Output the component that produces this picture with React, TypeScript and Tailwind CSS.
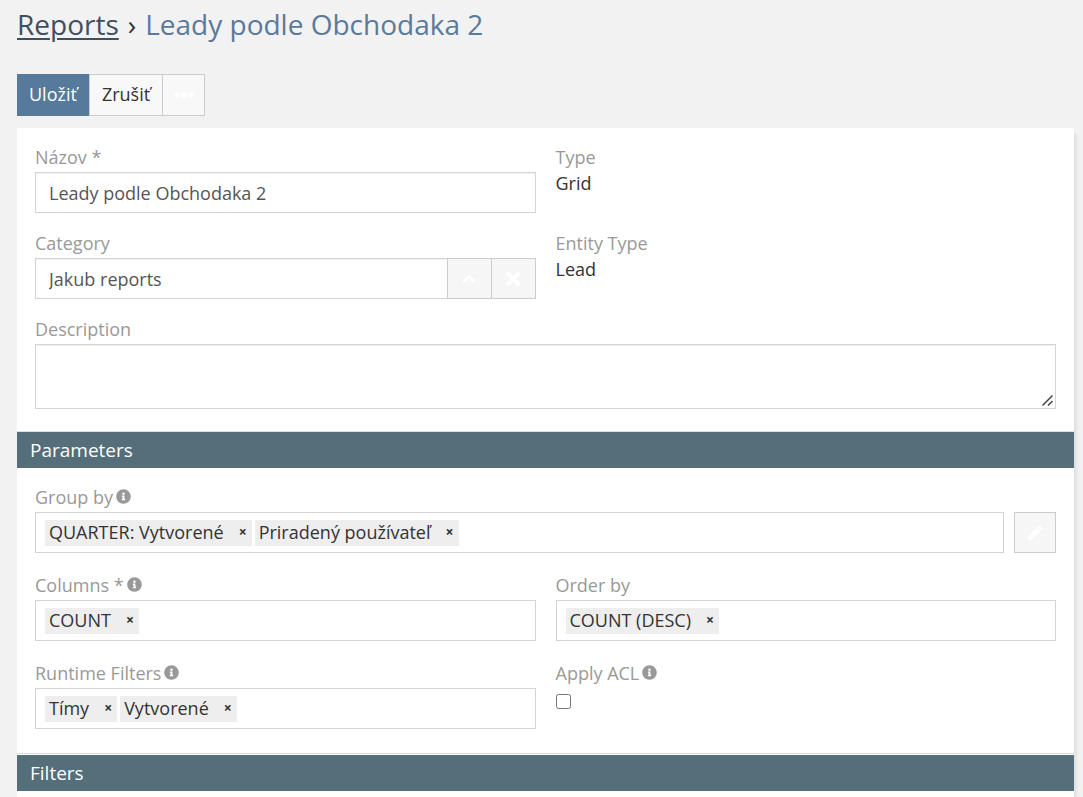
import { useState, type ReactNode } from "react";
import { FaEllipsisH, FaInfoCircle } from "react-icons/fa";

interface FieldProps {
  label: string;
  htmlFor?: string;
  info?: boolean;
  children: ReactNode;
}

function Field({ label, htmlFor, info, children }: FieldProps) {
  return (
    <div className="min-w-0">
      <label htmlFor={htmlFor} className="flex items-center gap-[3px] leading-[26px] text-[#999999]">
        {label}
        {info ? <FaInfoCircle size={15} className="mb-0.5" /> : null}
      </label>
      {children}
    </div>
  );
}

interface TagBoxProps {
  id: string;
  initial: string[];
}

function TagBox({ id, initial }: TagBoxProps) {
  const [items, setItems] = useState(initial);

  return (
    <div className="mt-0.5 flex h-[41px] min-w-0 flex-1 items-center gap-[3px] border border-[#d1d5d6] bg-white px-[9px]">
      {items.map((item) => (
        <span key={item} className="flex h-[26px] shrink-0 items-start bg-[#eeeeee] pl-1 leading-6 text-[#333333]">
          {item}
          <button
            type="button"
            aria-label={`Odstrániť ${item}`}
            className="ml-2.5 w-[18px] text-center text-sm font-bold leading-6"
            onClick={() => setItems(items.filter((other) => other !== item))}
          >
            ×
          </button>
        </span>
      ))}
      <input id={id} type="text" className="h-[26px] w-0 min-w-0 flex-1 bg-transparent outline-none" />
    </div>
  );
}

function PanelHeading({ children }: { children: ReactNode }) {
  return (
    <h2 className="h-9 bg-[#546e7a] px-[13px] text-[19px] font-medium leading-9 text-white">{children}</h2>
  );
}

function ChevronUpIcon() {
  return (
    <svg width="14" height="14" viewBox="0 0 14 14" fill="none" stroke="currentColor" strokeWidth="3">
      <path d="M1.5 10 7 4.5 12.5 10" />
    </svg>
  );
}

function RemoveIcon() {
  return (
    <svg width="16" height="16" viewBox="0 0 16 16" fill="none" stroke="currentColor" strokeWidth="4">
      <path d="M2 2 14 14M14 2 2 14" />
    </svg>
  );
}

function PencilIcon() {
  return (
    <svg width="16" height="16" viewBox="0 0 16 16" fill="currentColor">
      <path d="M11.5 1 Q12.5 0 13.5 1 L15 2.5 Q16 3.5 15 4.5 L14 5.5 10.5 2ZM9.8 2.7 13.3 6.2 5 14.5 0.3 15.7 1.5 11Z" />
    </svg>
  );
}

const INPUT = "h-[41px] min-w-0 border border-[#d1d5d6] bg-white px-[13px] text-[#555555] outline-none shadow-[inset_0_1px_1px_rgba(0,0,0,0.06)]";
const ICON_BUTTON = "flex items-center justify-center border border-[#cccccc] bg-[#f6f6f6] text-white";

export default function App() {
  const [name, setName] = useState("Leady podle Obchodaka 2");
  const [category, setCategory] = useState("Jakub reports");

  return (
    <main className="flex min-h-screen flex-col bg-[#f2f2f2] pl-[17px] pr-[9px] font-['Open_Sans',sans-serif] text-lg text-[#333333]">
      <h1 className="flex gap-[9px] pt-1 text-[28px] leading-10">
        <a href="#reports" className="text-[#3f4f5e] underline decoration-2 underline-offset-3">
          Reports
        </a>
        <span className="text-[#333333]">›</span>
        <span className="text-[#5a7a99]">Leady podle Obchodaka 2</span>
      </h1>

      <div className="mt-[30px] flex h-[42px] leading-6">
        <button type="button" className="bg-[#557a9b] px-3 pb-0.5 text-white">
          Uložiť
        </button>
        <button type="button" className="border border-[#cccccc] bg-[#f8f8f8] px-3 pb-0.5">
          Zrušiť
        </button>
        <button
          type="button"
          aria-label="Viac"
          className="-ml-px flex w-[43px] items-center justify-center border border-[#cccccc] bg-[#f8f8f8] text-white"
        >
          <FaEllipsisH size={20} />
        </button>
      </div>

      <form className="mt-3 flex-1 bg-white shadow-[4px_4px_4px_-2px_rgba(0,0,0,0.1)]">
        <section className="border-b border-[#dde3e5] px-[18px] pb-[22px] pt-4">
          <div className="grid grid-cols-2 gap-x-5 gap-y-[17px]">
            <Field label="Názov *" htmlFor="name">
              <input
                id="name"
                type="text"
                value={name}
                onChange={(e) => setName(e.target.value)}
                className={`${INPUT} mt-0.5 block w-full`}
              />
            </Field>
            <Field label="Type">
              <p className="leading-[26px]">Grid</p>
            </Field>
            <Field label="Category" htmlFor="category">
              <div className="mt-0.5 flex h-[41px]">
                <input
                  id="category"
                  type="text"
                  value={category}
                  onChange={(e) => setCategory(e.target.value)}
                  className={`${INPUT} flex-1`}
                />
                <button type="button" aria-label="Vybrať" className={`${ICON_BUTTON} -ml-px w-[45px]`}>
                  <ChevronUpIcon />
                </button>
                <button
                  type="button"
                  aria-label="Vymazať"
                  className={`${ICON_BUTTON} -ml-px w-[45px]`}
                  onClick={() => setCategory("")}
                >
                  <RemoveIcon />
                </button>
              </div>
            </Field>
            <Field label="Entity Type">
              <p className="leading-[26px]">Lead</p>
            </Field>
            <div className="col-span-2">
              <Field label="Description" htmlFor="description">
                <div className="relative mt-0.5">
                  <textarea
                    id="description"
                    className="block h-[65px] w-full resize-none border border-[#d1d5d6] px-[13px] py-2 text-[#555555] outline-none shadow-[inset_0_1px_1px_rgba(0,0,0,0.06)]"
                  />
                  <svg
                    className="pointer-events-none absolute bottom-[3px] right-[3px]"
                    width="11"
                    height="11"
                    viewBox="0 0 11 11"
                    stroke="#444444"
                    strokeWidth="1.5"
                  >
                    <path d="M0.5 10.5 10.5 0.5M6 10.5 10.5 6" />
                  </svg>
                </div>
              </Field>
            </div>
          </div>
        </section>

        <PanelHeading>Parameters</PanelHeading>
        <section className="mb-px border-b border-[#d5dfe0] px-[18px] pb-6 pt-4">
          <div className="grid grid-cols-2 gap-x-5 gap-y-[19px]">
            <div className="col-span-2">
              <Field label="Group by" htmlFor="group-by" info>
                <div className="flex gap-2.5">
                  <TagBox id="group-by" initial={["QUARTER: Vytvorené", "Priradený používateľ"]} />
                  <button type="button" aria-label="Upraviť" className={`${ICON_BUTTON} mt-0.5 w-[42px]`}>
                    <PencilIcon />
                  </button>
                </div>
              </Field>
            </div>
            <Field label="Columns *" htmlFor="columns" info>
              <TagBox id="columns" initial={["COUNT"]} />
            </Field>
            <Field label="Order by" htmlFor="order-by">
              <TagBox id="order-by" initial={["COUNT (DESC)"]} />
            </Field>
            <Field label="Runtime Filters" htmlFor="runtime-filters" info>
              <TagBox id="runtime-filters" initial={["Tímy", "Vytvorené"]} />
            </Field>
            <Field label="Apply ACL" htmlFor="apply-acl" info>
              <input id="apply-acl" type="checkbox" className="mt-2 block size-[15px]" />
            </Field>
          </div>
        </section>

        <PanelHeading>Filters</PanelHeading>
      </form>
    </main>
  );
}
